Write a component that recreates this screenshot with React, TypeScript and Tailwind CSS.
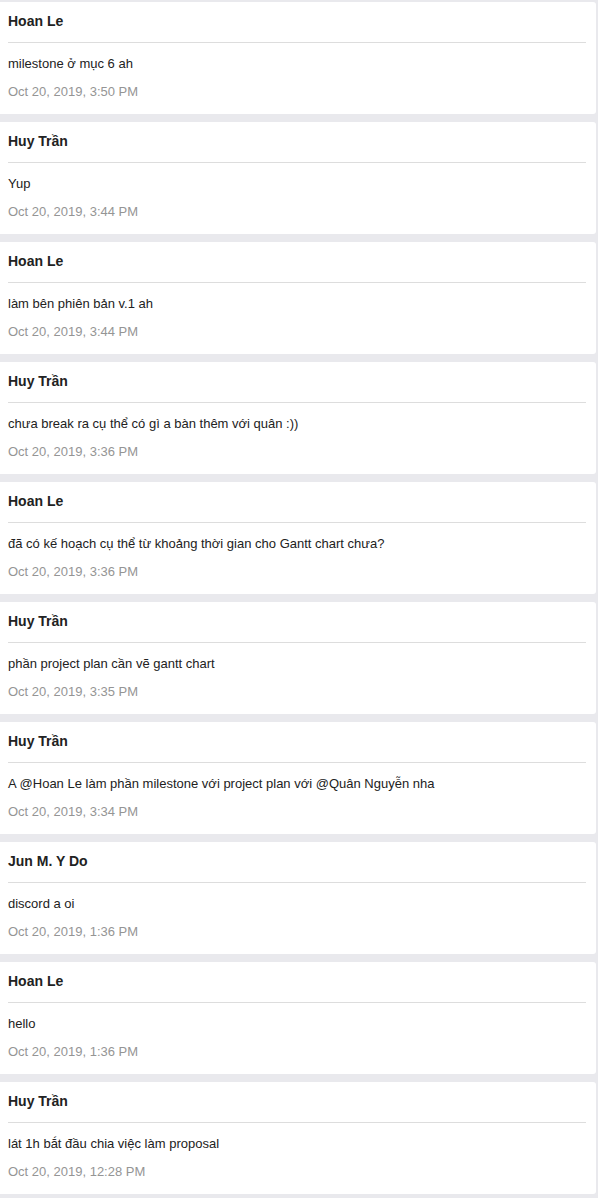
import React from "react";

type Comment = { name: string; text: string; time: string };

const comments: Comment[] = [
  { name: "Hoan Le", text: "milestone ở mục 6 ah", time: "Oct 20, 2019, 3:50 PM" },
  { name: "Huy Trần", text: "Yup", time: "Oct 20, 2019, 3:44 PM" },
  { name: "Hoan Le", text: "làm bên phiên bản v.1 ah", time: "Oct 20, 2019, 3:44 PM" },
  { name: "Huy Trần", text: "chưa break ra cụ thể có gì a bàn thêm với quân :))", time: "Oct 20, 2019, 3:36 PM" },
  { name: "Hoan Le", text: "đã có kế hoạch cụ thể từ khoảng thời gian cho Gantt chart chưa?", time: "Oct 20, 2019, 3:36 PM" },
  { name: "Huy Trần", text: "phần project plan cần vẽ gantt chart", time: "Oct 20, 2019, 3:35 PM" },
  { name: "Huy Trần", text: "A @Hoan Le làm phần milestone với project plan với @Quân Nguyễn nha", time: "Oct 20, 2019, 3:34 PM" },
  { name: "Jun M. Y Do", text: "discord a oi", time: "Oct 20, 2019, 1:36 PM" },
  { name: "Hoan Le", text: "hello", time: "Oct 20, 2019, 1:36 PM" },
  { name: "Huy Trần", text: "lát 1h bắt đầu chia việc làm proposal", time: "Oct 20, 2019, 12:28 PM" },
];

const App: React.FC = () => {
  return (
    <div
      className="min-h-[1198px] bg-[#e9e9ed] pr-[2px] pt-[2px] pb-[4px]"
      style={{ fontFamily: '"Liberation Sans", Arial, sans-serif' }}
    >
      <div className="flex flex-col gap-[8px]">
        {comments.map((c, i) => (
          <div key={i} className="h-[112px] rounded-r-[3px] bg-white pl-[8px] pr-[10px] pt-[9px]">
            <p className="h-[20px] text-[14px] font-bold leading-[20px] text-[#222222]">{c.name}</p>
            <div className="mt-[11px] h-px bg-[#dddddd]" />
            <p className="mt-[11px] h-[20px] text-[13px] leading-[20px] text-[#222222]">{c.text}</p>
            <p className="mt-[8px] h-[20px] text-[13px] leading-[20px] text-[#959595]">{c.time}</p>
          </div>
        ))}
      </div>
    </div>
  );
};

export default App;
